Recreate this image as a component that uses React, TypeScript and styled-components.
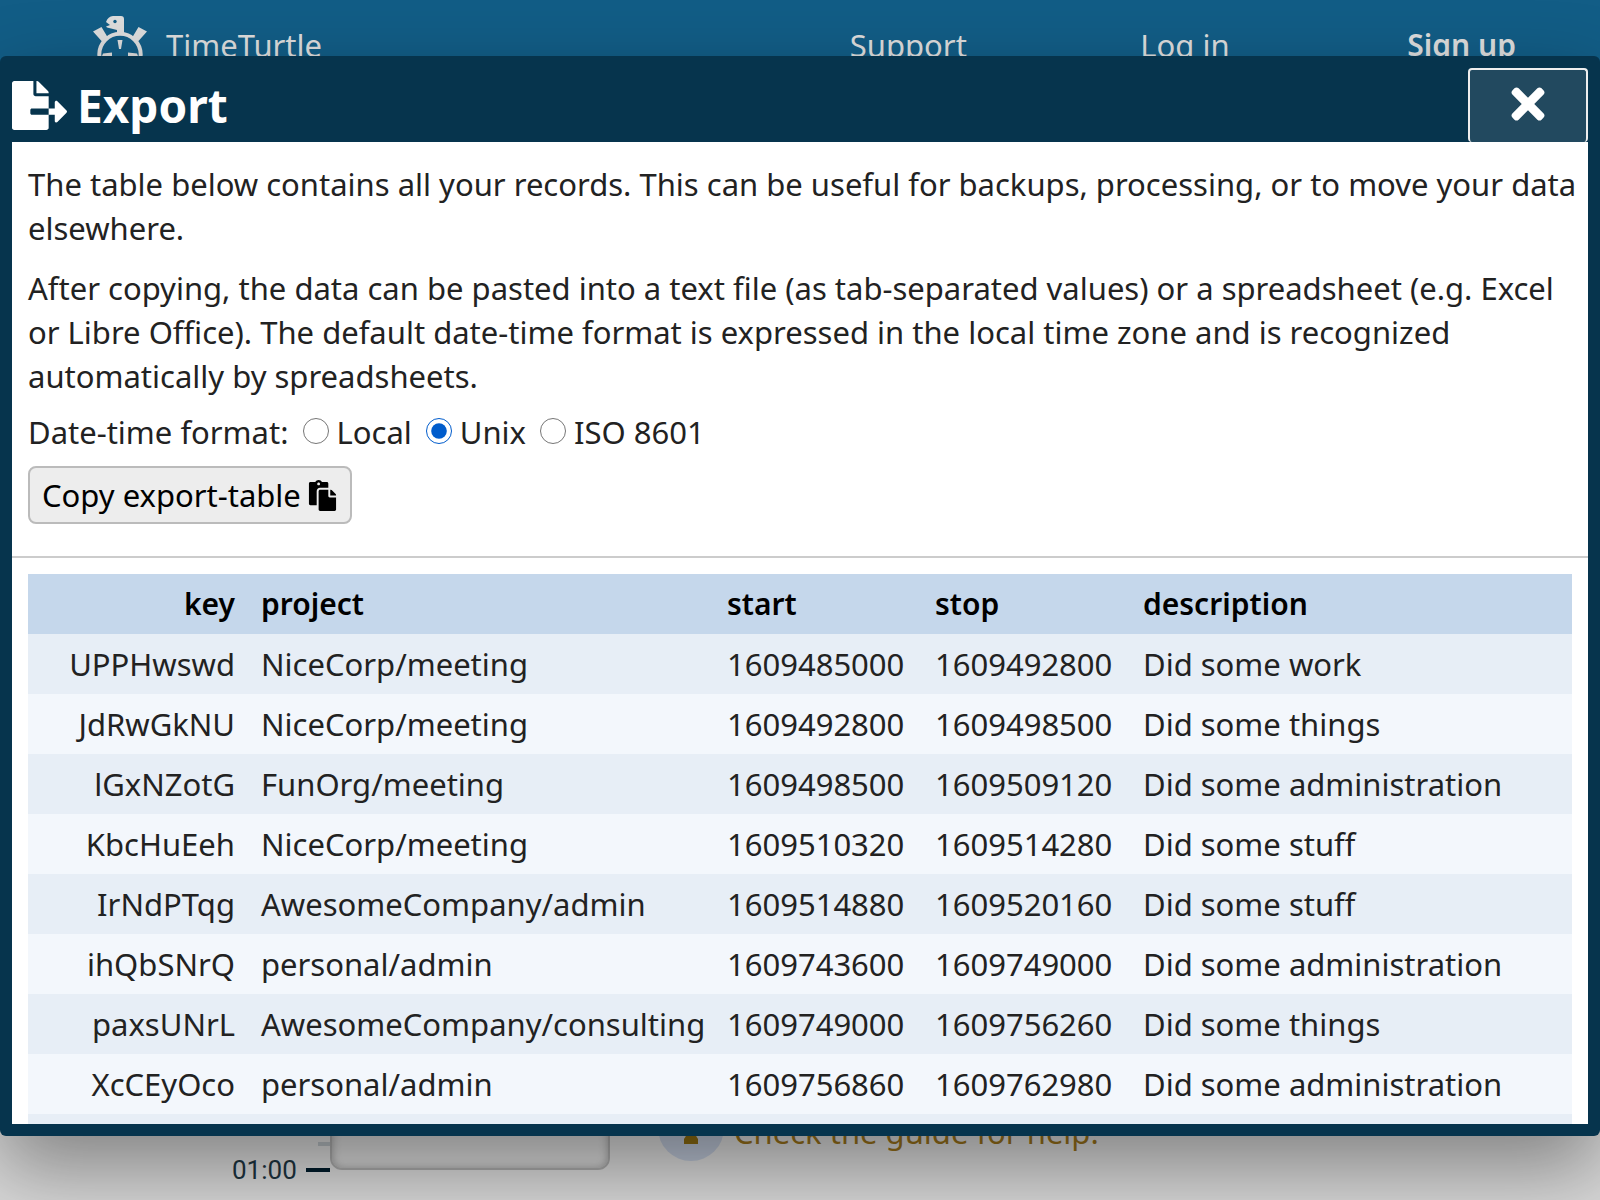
import React, { useState } from "react";
import styled, { createGlobalStyle } from "styled-components";
import { FaFileExport, FaPaste, FaTimes } from "react-icons/fa";

const GlobalStyle = createGlobalStyle`
  *, *::before, *::after { box-sizing: border-box; }
  html, body { margin: 0; height: 100%; overflow: hidden; }
  #root { height: 100%; }
  body {
    font-family: "Noto Sans", "Open Sans", sans-serif;
    font-size: 31px;
    line-height: 44px;
    color: #222;
    background: #d8d8d8;
  }
  button, input { font: inherit; }
`;

const Page = styled.div`
  position: relative;
  height: 100vh;
  display: flex;
  flex-direction: column;
  justify-content: space-between;
  overflow: hidden;
`;

const TopBar = styled.header`
  display: grid;
  grid-template-columns: 770px 1fr 1fr 1fr;
  align-items: center;
  height: 90px;
  background: #125d86;
`;

const Brand = styled.div`
  display: flex;
  align-items: center;
  gap: 18px;
  padding-left: 92px;
  color: #ddd;
`;

const NavLink = styled.a<{ $strong?: boolean }>`
  color: #ddd;
  text-align: center;
  text-decoration: none;
  font-size: ${(p) => (p.$strong ? 30 : 31)}px;
  font-weight: ${(p) => (p.$strong ? 600 : 400)};
`;

const Timeline = styled.main`
  display: flex;
  align-items: flex-end;
  height: 120px;
  padding-left: 232px;
`;

const HourLabel = styled.span`
  width: 62px;
  padding-bottom: 8px;
  font-family: "Liberation Sans Narrow", "Roboto", sans-serif;
  font-size: 26px;
  color: #1d3440;
`;

const Ticks = styled.div`
  display: flex;
  flex-direction: column;
  align-items: flex-end;
  gap: 22px;
  width: 36px;
  padding-bottom: 28px;
`;

const Tick = styled.i<{ $major?: boolean }>`
  width: ${(p) => (p.$major ? 24 : 12)}px;
  height: 4px;
  background: ${(p) => (p.$major ? "#001c2b" : "#b4babe")};
`;

const RecordBox = styled.div`
  align-self: flex-start;
  width: 280px;
  height: 90px;
  border: 2px solid #a8a8a8;
  border-radius: 12px;
  background: #d8d8d8;
  box-shadow: inset 0 0 8px #999;
`;

const Hint = styled.a`
  display: flex;
  align-items: center;
  align-self: flex-start;
  gap: 10px;
  margin: 15px 0 0 48px;
  color: #96701a;
  text-decoration: none;
`;

const HintBadge = styled.span`
  display: grid;
  place-items: center;
  width: 66px;
  height: 66px;
  border-radius: 50%;
  background: #b9c2d2;
`;

const HintText = styled.span`
  padding-top: 8px;
`;

const Dialog = styled.section`
  position: absolute;
  inset: 56px 0 64px;
  display: flex;
  flex-direction: column;
  padding: 12px;
  border-radius: 6px;
  background: #06344d;
  box-shadow: 0 32px 80px rgba(0, 0, 0, 0.4);
`;

const TitleBar = styled.header`
  display: flex;
  justify-content: space-between;
  flex: none;
  height: 74px;
  color: #fff;
`;

const Title = styled.h1`
  display: flex;
  align-items: center;
  gap: 10px;
  margin: 0;
  font-size: 46px;
  line-height: 72px;
  font-weight: 700;
`;

const CloseButton = styled.button`
  display: grid;
  place-items: center;
  width: 120px;
  height: 74px;
  padding: 0 0 4px;
  border: 2px solid #eee;
  border-bottom-width: 0;
  border-radius: 4px;
  background: #22495f;
  color: #fff;
  font-size: 48px;
`;

const Content = styled.div`
  flex: 1;
  min-height: 0;
  overflow: hidden;
  background: #fff;
`;

const Intro = styled.div`
  padding: 20px 8px 32px 16px;
  border-bottom: 2px solid #ccc;
`;

const Paragraph = styled.p`
  margin: 0 0 16px;
`;

const FormatRow = styled.fieldset`
  display: flex;
  align-items: center;
  gap: 14px;
  margin: -4px 0 12px;
  padding: 0;
  border: 0;
`;

const Option = styled.label`
  display: flex;
  align-items: center;
  gap: 8px;
`;

const Radio = styled.input`
  width: 26px;
  height: 26px;
  margin: 0 0 2px;
  accent-color: #005ccc;
`;

const CopyButton = styled.button`
  display: flex;
  align-items: center;
  gap: 6px;
  height: 58px;
  padding: 0 12px;
  border: 2px solid #bbb;
  border-radius: 8px;
  background: #ededed;
  color: #000;
`;

const TableWrap = styled.div`
  padding: 16px;
`;

const Table = styled.table`
  width: 100%;
  border-collapse: collapse;
  table-layout: fixed;
`;

const Column = styled.col<{ $width?: number }>`
  width: ${(p) => (p.$width ? p.$width + "px" : "auto")};
`;

const Row = styled.tr`
  height: 60px;
  background: #f3f7fc;
  tbody &:nth-child(odd) { background: #e7eef6; }
  thead & { background: #c5d7eb; color: #000; }
`;

const cell = (align?: string) => `
  padding: 0 13px;
  text-align: ${align ?? "left"};
  white-space: nowrap;
`;
const HeadCell = styled.th<{ $align?: string }>`
  ${(p) => cell(p.$align)}
  font-size: 30px;
  font-weight: 600;
`;
const Cell = styled.td<{ $align?: string }>`
  ${(p) => cell(p.$align)}
`;

const records = [
  ["UPPHwswd", "NiceCorp/meeting", "1609485000", "1609492800", "Did some work"],
  ["JdRwGkNU", "NiceCorp/meeting", "1609492800", "1609498500", "Did some things"],
  ["lGxNZotG", "FunOrg/meeting", "1609498500", "1609509120", "Did some administration"],
  ["KbcHuEeh", "NiceCorp/meeting", "1609510320", "1609514280", "Did some stuff"],
  ["IrNdPTqg", "AwesomeCompany/admin", "1609514880", "1609520160", "Did some stuff"],
  ["ihQbSNrQ", "personal/admin", "1609743600", "1609749000", "Did some administration"],
  ["paxsUNrL", "AwesomeCompany/consulting", "1609749000", "1609756260", "Did some things"],
  ["XcCEyOco", "personal/admin", "1609756860", "1609762980", "Did some administration"],
  ["", "", "", "", ""],
];
const headings = ["key", "project", "start", "stop", "description"];
const widths = [220, 466, 208, 208, undefined];
const formats = ["Local", "Unix", "ISO 8601"];

function TurtleLogo() {
  return (
    <svg width="56" height="64" viewBox="0 0 56 64" aria-hidden="true">
      <circle cx="28" cy="41.5" r="20.7" fill="none" stroke="#ddd" strokeWidth="4" />
      <path
        d="M14 9 Q16 3.500 21 3 H29 Q32 3 32 6 V21 H25 V17 L15 14.500 L14 13.500 L18 12 Z"
        fill="#ddd"
      />
      <path d="M1 18.500 L9.500 14 L15.500 24 L10 28.500 Z M55 18.500 L46.500 14 L40.500 24 L46 28.500 Z" fill="#ddd" />
      <path d="M25.500 27 h5 l-1.500 9 h-2 Z M10 43 l1 -2.500 l9 -1 v3.500 Z M46 43 l-1 -2.500 l-9 -1 v3.500 Z" fill="#ddd" />
      <circle cx="23" cy="8.500" r="1.700" fill="#125d86" />
    </svg>
  );
}

function PawnIcon() {
  return (
    <svg width="28" height="32" viewBox="0 0 28 32" aria-hidden="true">
      <path d="M14 2 a6 6 0 0 1 4 10.500 C17 20 18 23 21 27 V32 H7 V27 C10 23 11 20 10 12.500 A6 6 0 0 1 14 2 Z" fill="#8a6a10" />
    </svg>
  );
}

export default function App() {
  const [format, setFormat] = useState("Unix");
  return (
    <Page>
      <GlobalStyle />
      <TopBar>
        <Brand>
          <TurtleLogo />
          TimeTurtle
        </Brand>
        <NavLink href="#support">Support</NavLink>
        <NavLink href="#login">Log in</NavLink>
        <NavLink href="#signup" $strong>Sign up</NavLink>
      </TopBar>
      <Timeline>
        <HourLabel>01:00</HourLabel>
        <Ticks>
          <Tick />
          <Tick $major />
        </Ticks>
        <RecordBox />
        <Hint href="#guide">
          <HintBadge><PawnIcon /></HintBadge>
          <HintText>Check the guide for help.</HintText>
        </Hint>
      </Timeline>
      <Dialog role="dialog" aria-labelledby="export-title">
        <TitleBar>
          <Title id="export-title">
            <FaFileExport size={55} />
            Export
          </Title>
          <CloseButton aria-label="Close"><FaTimes /></CloseButton>
        </TitleBar>
        <Content>
          <Intro>
            <Paragraph>
              The table below contains all your records. This can be useful for backups, processing, or to move your
              data elsewhere.
            </Paragraph>
            <Paragraph>
              After copying, the data can be pasted into a text file (as tab-separated values) or a spreadsheet (e.g.
              Excel or Libre Office). The default date-time format is expressed in the local time zone and is
              recognized automatically by spreadsheets.
            </Paragraph>
            <FormatRow aria-label="Date-time format">
              <span>Date-time format:</span>
              {formats.map((name) => (
                <Option key={name}>
                  <Radio type="radio" name="format" checked={format === name} onChange={() => setFormat(name)} />
                  {name}
                </Option>
              ))}
            </FormatRow>
            <CopyButton>
              Copy export-table
              <FaPaste />
            </CopyButton>
          </Intro>
          <TableWrap>
            <Table>
              <colgroup>
                {widths.map((width, i) => <Column key={i} $width={width} />)}
              </colgroup>
              <thead>
                <Row>
                  {headings.map((heading, i) => (
                    <HeadCell key={heading} $align={i === 0 ? "right" : "left"}>{heading}</HeadCell>
                  ))}
                </Row>
              </thead>
              <tbody>
                {records.map((record, r) => (
                  <Row key={r}>
                    {record.map((value, i) => (
                      <Cell key={i} $align={i === 0 ? "right" : "left"}>{value}</Cell>
                    ))}
                  </Row>
                ))}
              </tbody>
            </Table>
          </TableWrap>
        </Content>
      </Dialog>
    </Page>
  );
}
